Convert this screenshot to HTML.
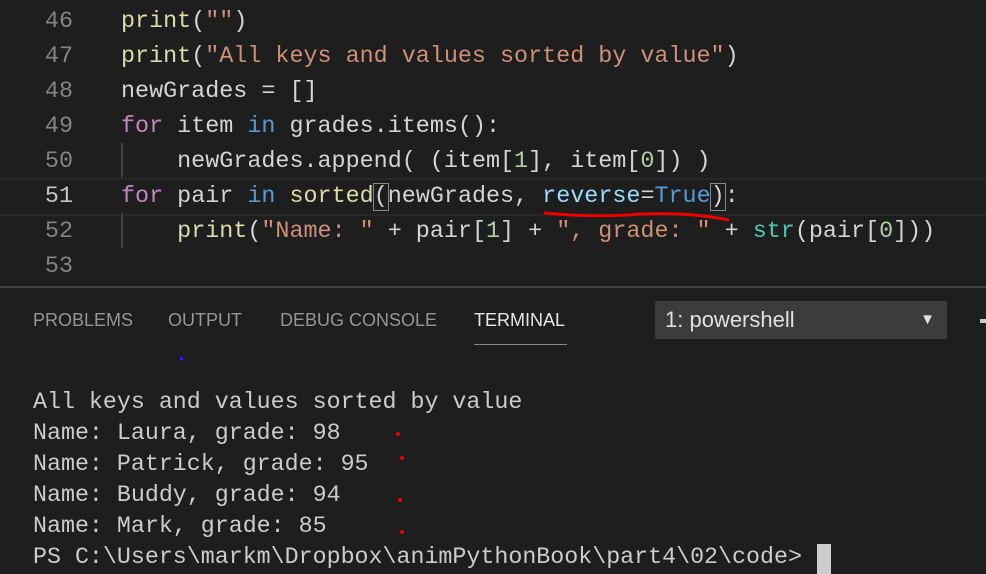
<!DOCTYPE html>
<html><head><style>
body{margin:0;width:986px;height:574px;background:#1e1e1e;overflow:hidden;position:relative;font-family:"Liberation Mono",monospace}
.ln{position:absolute;left:0;width:73px;text-align:right;color:#858585;font-size:23.4px;line-height:35px}
.cd{position:absolute;left:121px;color:#d4d4d4;font-size:23.4px;line-height:35px;white-space:pre}
.f{color:#dcdcaa}.s{color:#ce9178}.k{color:#c586c0}.b{color:#569cd6}.v{color:#9cdcfe}.n{color:#b5cea8}.t{color:#4ec9b0}
.tab{position:absolute;top:310px;font-family:"Liberation Sans",sans-serif;font-size:18px;color:#969696}
.term{position:absolute;left:33px;color:#cccccc;font-size:23.3px;line-height:31px;white-space:pre}
.dot{position:absolute;width:4px;height:4px;background:#e00;border-radius:2px}
</style></head><body>
<div style="position:absolute;left:0;right:0;top:178px;height:34px;border-top:2px solid #282828;border-bottom:2px solid #282828"></div>
<div style="position:absolute;left:121px;top:143px;width:2px;height:35px;background:#404040"></div>
<div style="position:absolute;left:121px;top:213px;width:2px;height:35px;background:#404040"></div>
<div class="ln" style="top:5px">46<br>47<br>48<br>49<br>50<br><span style="color:#c6c6c6">51</span><br>52<br>53</div>
<div class="cd" style="top:5px"><span class="f">print</span>(<span class="s">""</span>)
<span class="f">print</span>(<span class="s">"All keys and values sorted by value"</span>)
newGrades = []
<span class="k">for</span> item <span class="b">in</span> grades.items():
    newGrades.append( (item[<span class="n">1</span>], item[<span class="n">0</span>]) )
<span class="k">for</span> pair <span class="b">in</span> <span class="f">sorted</span><span style="outline:1px solid #888">(</span>newGrades, <span class="v">reverse</span>=<span class="b">True</span><span style="outline:1px solid #888">)</span>:
    <span class="f">print</span>(<span class="s">"Name: "</span> + pair[<span class="n">1</span>] + <span class="s">", grade: "</span> + <span class="t">str</span>(pair[<span class="n">0</span>]))
</div>
<svg style="position:absolute;left:0;top:0" width="986" height="574"><path d="M544 213 Q600 218 640 214 Q690 212 729 220" stroke="#e00" stroke-width="3" fill="none"/></svg>
<div style="position:absolute;left:0;right:0;top:286px;height:2px;background:#444"></div>
<div class="tab" style="left:33px">PROBLEMS</div>
<div class="tab" style="left:168px">OUTPUT</div>
<div class="tab" style="left:280px">DEBUG CONSOLE</div>
<div class="tab" style="left:474px;color:#e7e7e7">TERMINAL</div>
<div style="position:absolute;left:474px;top:344px;width:93px;height:1px;background:#888"></div>
<div style="position:absolute;left:655px;top:301px;width:292px;height:38px;background:#3c3c3c;font-family:'Liberation Sans',sans-serif;font-size:22px;color:#e0e0e0;line-height:38px;text-indent:10px">1: powershell<span style="position:absolute;right:12px;font-size:15px">▼</span></div>
<div style="position:absolute;left:980px;top:319px;width:6px;height:4px;background:#ccc"></div>
<div style="position:absolute;left:180px;top:357px;width:3px;height:3px;background:#22f"></div>
<div class="term" style="top:387px">All keys and values sorted by value
Name: Laura, grade: 98
Name: Patrick, grade: 95
Name: Buddy, grade: 94
Name: Mark, grade: 85
PS C:\Users\markm\Dropbox\animPythonBook\part4\02\code> </div>
<div style="position:absolute;left:817px;top:544px;width:14px;height:30px;background:#ccc"></div>
<div class="dot" style="left:396px;top:432px"></div>
<div class="dot" style="left:400px;top:456px"></div>
<div class="dot" style="left:398px;top:498px"></div>
<div class="dot" style="left:400px;top:530px"></div>
</body></html>
